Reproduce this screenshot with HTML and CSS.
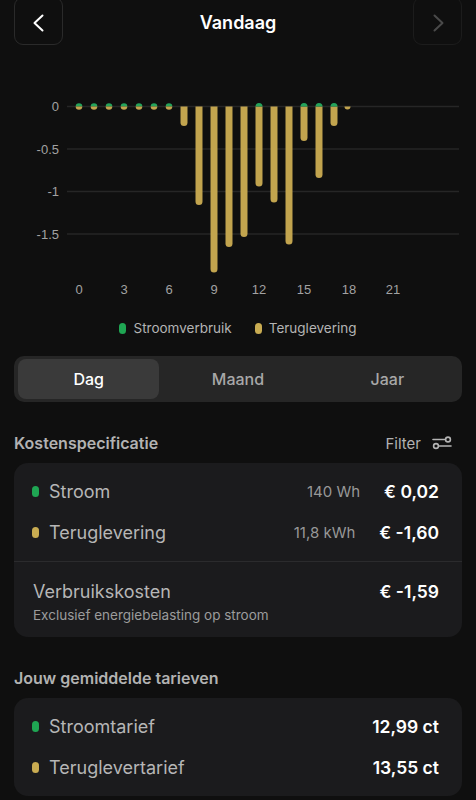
FILE: index.html
```html
<!DOCTYPE html>
<html lang="nl">
<head>
<meta charset="utf-8">
<title>Vandaag</title>
<link rel="stylesheet" href="styles.css">
</head>
<body>
<div class="page">
  <header class="topbar">
    <button class="navbtn">
      <svg width="20" height="20" viewBox="0 0 20 20"><path d="M13.5 2.5 L5.5 10 L13.5 17.5" fill="none" stroke="#fff" stroke-width="2" stroke-linecap="round" stroke-linejoin="round"/></svg>
    </button>
    <h1 class="title">Vandaag</h1>
    <button class="navbtn navbtn-disabled">
      <svg width="20" height="20" viewBox="0 0 20 20"><path d="M6.5 2.5 L14.5 10 L6.5 17.5" fill="none" stroke="#4a4a4a" stroke-width="2" stroke-linecap="round" stroke-linejoin="round"/></svg>
    </button>
  </header>

  <svg class="chart" width="476" height="260" viewBox="0 45 476 260">
    <g stroke="#262626" stroke-width="1.5">
      <line x1="67" y1="106.5" x2="459" y2="106.5"/>
      <line x1="67" y1="149" x2="459" y2="149"/>
      <line x1="67" y1="191.5" x2="459" y2="191.5"/>
      <line x1="67" y1="234" x2="459" y2="234"/>
    </g>
    <g class="axis" text-anchor="end">
      <text x="59" y="111">0</text>
      <text x="59" y="153.5">-0.5</text>
      <text x="59" y="196">-1</text>
      <text x="59" y="238.5">-1.5</text>
    </g>
    <g class="axis" text-anchor="middle">
      <text x="79" y="294">0</text>
      <text x="124" y="294">3</text>
      <text x="169" y="294">6</text>
      <text x="214" y="294">9</text>
      <text x="259" y="294">12</text>
      <text x="304" y="294">15</text>
      <text x="349" y="294">18</text>
      <text x="393" y="294">21</text>
    </g>
    <g>
      <path d="M75.7 106.5 A3.3 3.3 0 0 1 82.3 106.5 Z" fill="#24a35b"/><path d="M75.7 106.5 A3.3 3.3 0 0 0 82.3 106.5 Z" fill="#c2a44e"/>
      <path d="M90.7 106.5 A3.3 3.3 0 0 1 97.3 106.5 Z" fill="#24a35b"/><path d="M90.7 106.5 A3.3 3.3 0 0 0 97.3 106.5 Z" fill="#c2a44e"/>
      <path d="M105.7 106.5 A3.3 3.3 0 0 1 112.3 106.5 Z" fill="#24a35b"/><path d="M105.7 106.5 A3.3 3.3 0 0 0 112.3 106.5 Z" fill="#c2a44e"/>
      <path d="M120.7 106.5 A3.3 3.3 0 0 1 127.3 106.5 Z" fill="#24a35b"/><path d="M120.7 106.5 A3.3 3.3 0 0 0 127.3 106.5 Z" fill="#c2a44e"/>
      <path d="M135.7 106.5 A3.3 3.3 0 0 1 142.3 106.5 Z" fill="#24a35b"/><path d="M135.7 106.5 A3.3 3.3 0 0 0 142.3 106.5 Z" fill="#c2a44e"/>
      <path d="M150.7 106.5 A3.3 3.3 0 0 1 157.3 106.5 Z" fill="#24a35b"/><path d="M150.7 106.5 A3.3 3.3 0 0 0 157.3 106.5 Z" fill="#c2a44e"/>
      <path d="M165.7 106.5 A3.3 3.3 0 0 1 172.3 106.5 Z" fill="#24a35b"/><path d="M165.7 106.5 A3.3 3.3 0 0 0 172.3 106.5 Z" fill="#c2a44e"/>
    </g>
    <g fill="#c2a44e">
      <path d="M180.5 106.5 V122.5 A3.5 3.5 0 0 0 187.5 122.5 V106.5 Z"/>
      <path d="M195.5 106.5 V201.5 A3.5 3.5 0 0 0 202.5 201.5 V106.5 Z"/>
      <path d="M210.5 106.5 V269 A3.5 3.5 0 0 0 217.5 269 V106.5 Z"/>
      <path d="M225.5 106.5 V243.5 A3.5 3.5 0 0 0 232.5 243.5 V106.5 Z"/>
      <path d="M240.5 106.5 V233.5 A3.5 3.5 0 0 0 247.5 233.5 V106.5 Z"/>
      <path d="M255.5 106.5 V183 A3.5 3.5 0 0 0 262.5 183 V106.5 Z"/>
      <path d="M270.5 106.5 V199 A3.5 3.5 0 0 0 277.5 199 V106.5 Z"/>
      <path d="M285.5 106.5 V241 A3.5 3.5 0 0 0 292.5 241 V106.5 Z"/>
      <path d="M300.5 106.5 V137.5 A3.5 3.5 0 0 0 307.5 137.5 V106.5 Z"/>
      <path d="M315.5 106.5 V174.5 A3.5 3.5 0 0 0 322.5 174.5 V106.5 Z"/>
      <path d="M330.5 106.5 V122.5 A3.5 3.5 0 0 0 337.5 122.5 V106.5 Z"/>
      <path d="M344.5 106.5 A3 3 0 0 0 350.5 106.5 Z"/>
    </g>
    <g fill="#24a35b">
      <path d="M255.5 106.5 A3.5 3.5 0 0 1 262.5 106.5 Z"/>
      <path d="M300.5 106.5 A3.5 3.5 0 0 1 307.5 106.5 Z"/>
      <path d="M315.5 106.5 A3.5 3.5 0 0 1 322.5 106.5 Z"/>
      <path d="M330.5 106.5 A3.5 3.5 0 0 1 337.5 106.5 Z"/>
    </g>
  </svg>

  <div class="legend">
    <span class="legend-item"><span class="pill pill-green"></span>Stroomverbruik</span>
    <span class="legend-item"><span class="pill pill-yellow"></span>Teruglevering</span>
  </div>

  <div class="segmented">
    <div class="seg seg-active">Dag</div>
    <div class="seg">Maand</div>
    <div class="seg">Jaar</div>
  </div>

  <div class="section-head">
    <h2 class="section-title">Kostenspecificatie</h2>
    <div class="filter">Filter
      <svg width="20" height="14" viewBox="0 0 20 14"><g fill="none" stroke="#b4b4b4" stroke-width="1.6" stroke-linecap="round"><line x1="1" y1="3.5" x2="13" y2="3.5"/><circle cx="16" cy="3.5" r="2.4"/><line x1="7" y1="10" x2="19" y2="10"/><circle cx="4" cy="10" r="2.4"/></g></svg>
    </div>
  </div>

  <div class="card">
    <div class="rows">
      <div class="row">
        <span class="pill pill-green"></span>
        <span class="row-label">Stroom</span>
        <span class="row-unit">140 Wh</span>
        <span class="row-value">€ 0,02</span>
      </div>
      <div class="row">
        <span class="pill pill-yellow"></span>
        <span class="row-label">Teruglevering</span>
        <span class="row-unit">11,8 kWh</span>
        <span class="row-value">€ -1,60</span>
      </div>
    </div>
    <div class="card-foot">
      <div class="foot-line">
        <span class="row-label">Verbruikskosten</span>
        <span class="row-value">€ -1,59</span>
      </div>
      <div class="foot-sub">Exclusief energiebelasting op stroom</div>
    </div>
  </div>

  <div class="section-head">
    <h2 class="section-title">Jouw gemiddelde tarieven</h2>
  </div>

  <div class="card">
    <div class="rows">
      <div class="row">
        <span class="pill pill-green"></span>
        <span class="row-label">Stroomtarief</span>
        <span class="row-value">12,99 ct</span>
      </div>
      <div class="row">
        <span class="pill pill-yellow"></span>
        <span class="row-label">Teruglevertarief</span>
        <span class="row-value">13,55 ct</span>
      </div>
    </div>
  </div>
</div>
</body>
</html>
```

FILE: styles.css
```css
* { box-sizing: border-box; }
html, body { margin: 0; padding: 0; background: #0f0f0f; }
body {
  font-family: Inter, "Noto Sans", "DejaVu Sans", sans-serif;
  color: #fff;
  overflow: hidden;
}
.page { width: 476px; padding: 0 14px; }

.topbar {
  display: flex;
  align-items: center;
  justify-content: space-between;
  height: 48px;
  margin-top: -3px;
}
.navbtn {
  width: 49px;
  height: 48px;
  border: 1.5px solid #2a2a2a;
  border-radius: 9px;
  background: transparent;
  display: flex;
  align-items: center;
  justify-content: center;
  padding: 0;
  padding-top: 3px;
}
.navbtn-disabled { border-color: #1c1c1c; }
.title {
  margin: 0;
  padding-top: 3px;
  font-size: 18px;
  font-weight: 600;
  color: #fff;
}

.chart { display: block; margin: 0 -14px; }
.axis { font-family: "Liberation Sans", Arial, sans-serif; font-size: 13px; fill: #a2a2a2; }

.legend {
  display: flex;
  justify-content: center;
  gap: 23px;
  margin-top: 14px;
  height: 18px;
  align-items: center;
  font-size: 13.5px;
  color: #b4b4b4;
}
.legend-item { display: flex; align-items: center; gap: 7px; }
.pill { display: inline-block; width: 7px; height: 11px; border-radius: 4px; flex: none; }
.pill-green { background: #1fa653; }
.pill-yellow { background: #c9ac52; }

.segmented {
  margin-top: 19px;
  background: #262626;
  border-radius: 10px;
  padding: 3px 4px;
  display: grid;
  grid-template-columns: 1fr 1fr 1fr;
  gap: 8px;
}
.seg {
  height: 40px;
  display: flex;
  align-items: center;
  justify-content: center;
  font-size: 16px;
  font-weight: 500;
  color: #a8a8a8;
  border-radius: 8px;
}
.seg-active { background: #3a3a3a; color: #fff; }

.section-head {
  display: flex;
  justify-content: space-between;
  align-items: center;
  height: 20px;
  margin-top: 31px;
}
.section-title { margin: 0; font-size: 16px; font-weight: 600; color: #b2b2b2; }
.filter { display: flex; align-items: center; gap: 11px; font-size: 15px; color: #b2b2b2; margin-right: 10px; }
.filter svg { display: block; }

.card {
  margin-top: 10px;
  background: #1b1b1d;
  border-radius: 14px;
}
.rows { padding: 8px 0; }
.row {
  display: flex;
  align-items: center;
  height: 41px;
  padding: 0 23px 0 18px;
}
.row .pill { margin-right: 10px; }
.row-label { font-size: 18px; color: #b6b6b6; flex: 1; }
.row-unit { font-size: 15px; color: #989898; margin-right: 24px; }
.row-value { font-size: 17.5px; font-weight: 600; color: #fff; }

.card-foot {
  border-top: 1px solid #2b2b2d;
  padding: 18px 23px 14px 19px;
}
.foot-line { display: flex; align-items: center; height: 22px; }
.foot-sub { margin-top: 5px; height: 16px; line-height: 16px; font-size: 13.5px; color: #9c9c9c; }
```
